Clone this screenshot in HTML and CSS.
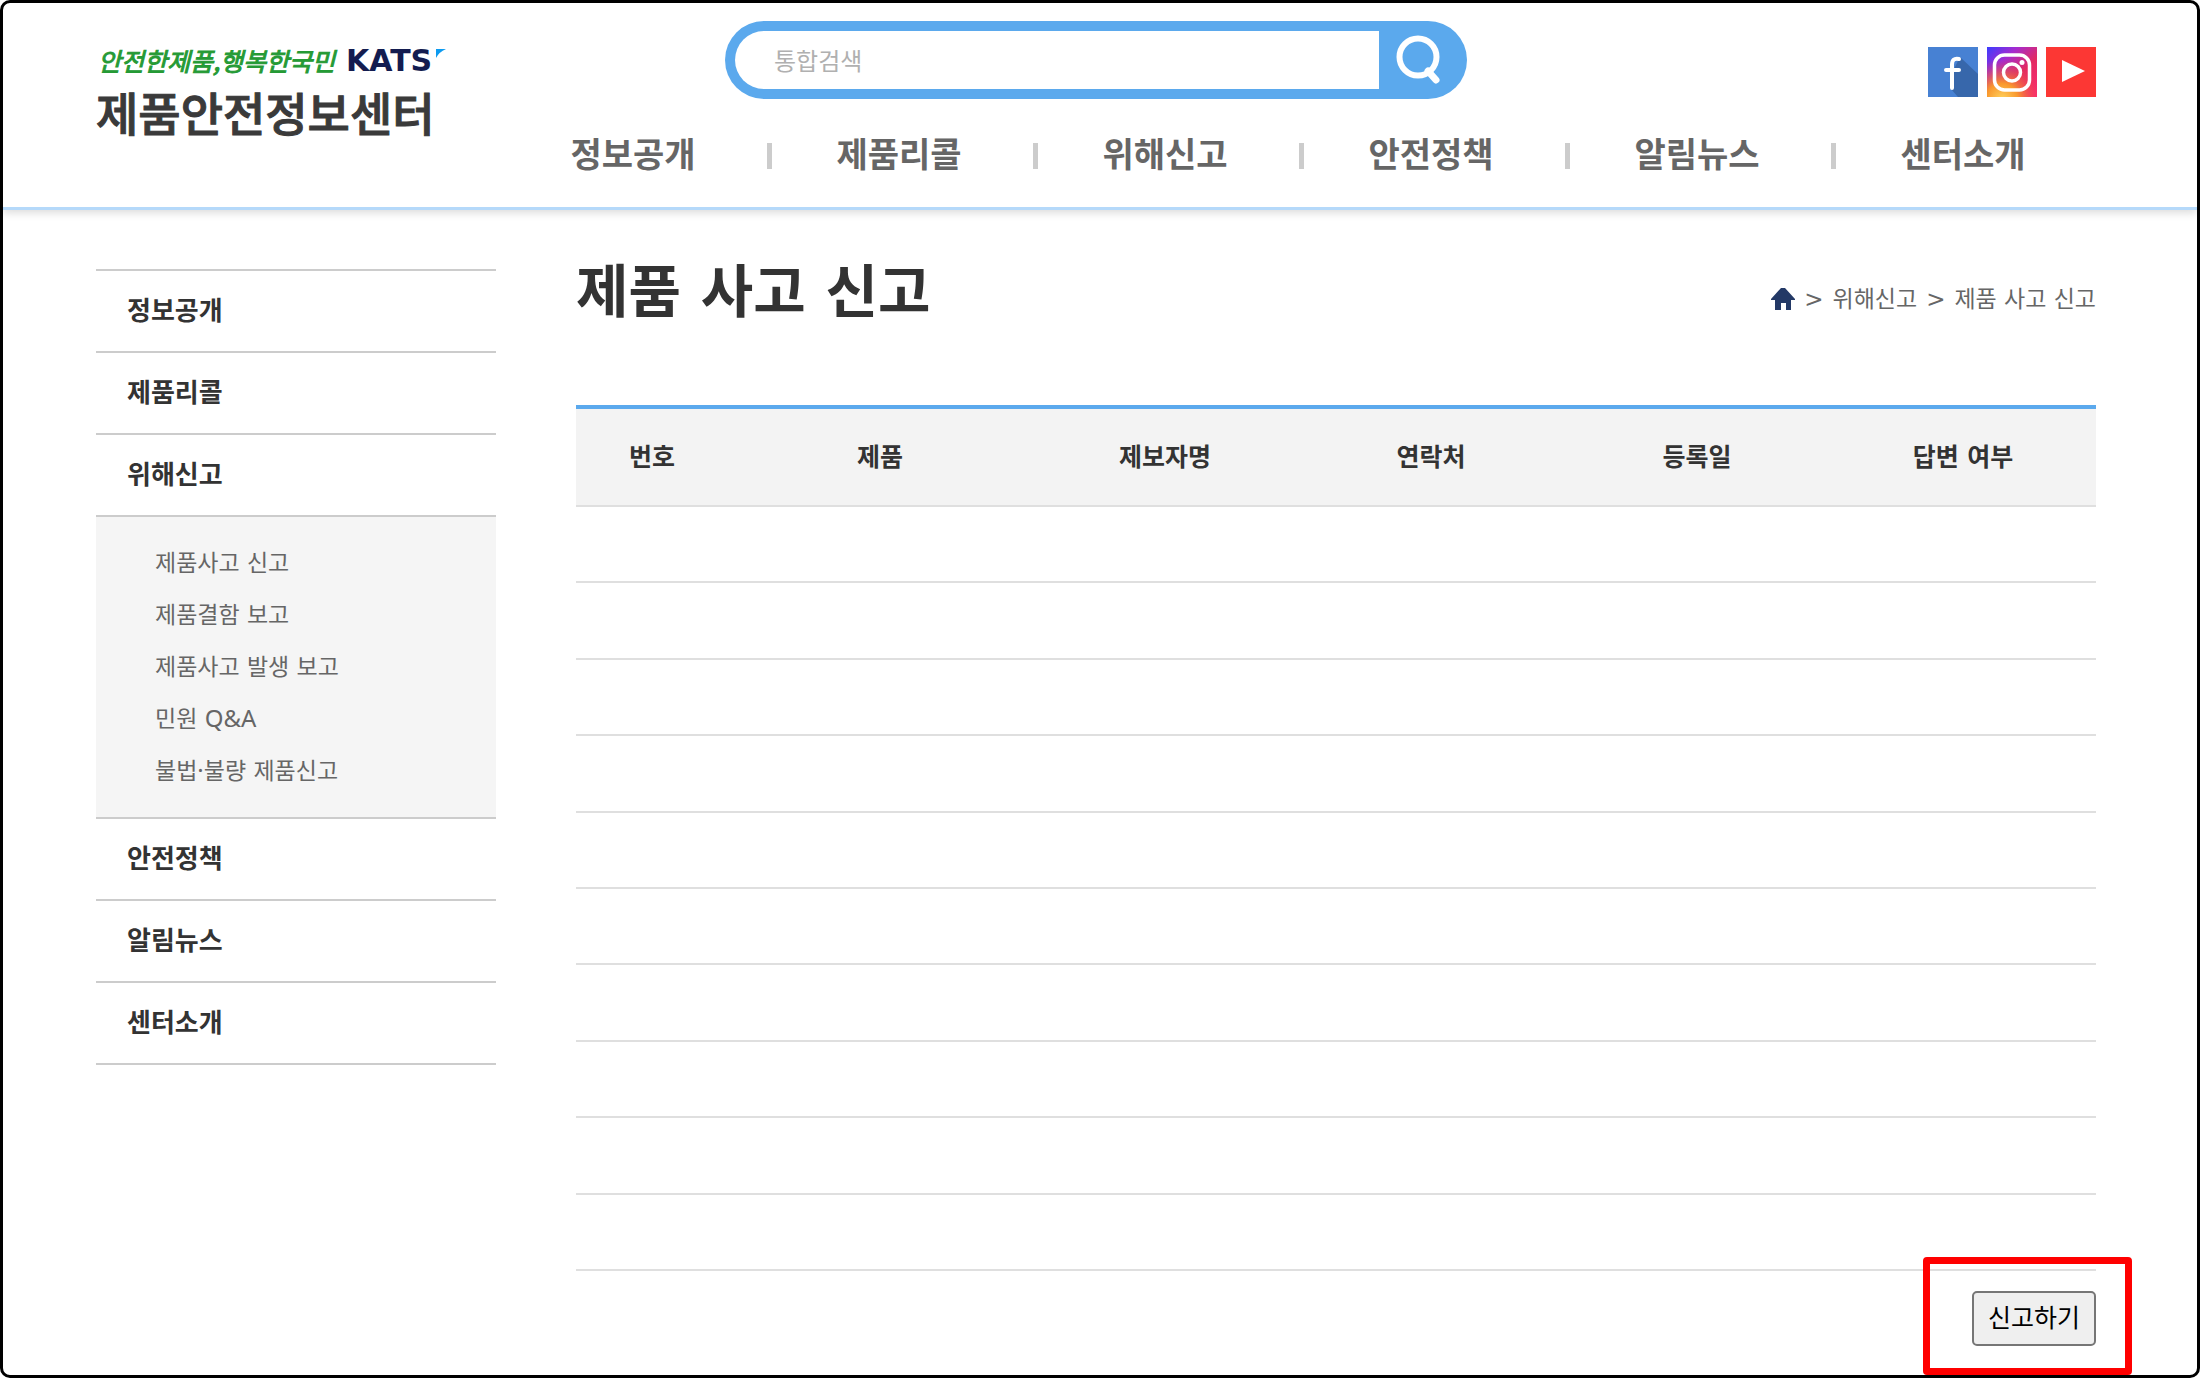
FILE: index.html
```html
<!DOCTYPE html>
<html lang="ko">
<head>
<meta charset="utf-8">
<meta name="viewport" content="width=device-width, initial-scale=1">
<title>제품 사고 신고 - 제품안전정보센터</title>
<link rel="stylesheet" href="styles.css">
</head>
<body>
<div class="frame">
  <header class="header">
    <a class="logo" href="#">
      <span class="logo-top">
        <span class="slogan">안전한제품,행복한국민</span>
        <span class="kats">KATS</span>
        <svg class="kats-mark" viewBox="0 0 10 9" aria-hidden="true"><path d="M0 0h10Q3 3 0 9z" fill="#0d9bf0"/></svg>
      </span>
      <span class="logo-name">제품안전정보센터</span>
    </a>
    <div class="header-main">
      <div class="header-tools">
        <form class="search" role="search">
          <input class="search-input" type="search" placeholder="통합검색" aria-label="통합검색">
          <button class="search-button" type="button" aria-label="검색">
            <svg viewBox="0 0 50 50" aria-hidden="true"><path d="M33 36L41 45" stroke="#fff" stroke-width="7" stroke-linecap="round"/><circle cx="23" cy="22" r="18.5" fill="none" stroke="#fff" stroke-width="6"/></svg>
          </button>
        </form>
        <div class="social">
          <a href="#" aria-label="페이스북"><svg viewBox="0 0 50 50"><path fill="#4781d3" d="M0 0h50v50H0z"/><path fill="#3767ab" d="M32 10l18 17v23H30l-7-8 3-20z"/><path d="M31 12c-5-1-7 1-7 6v23M18 23h13" fill="none" stroke="#fff" stroke-width="4" stroke-linecap="round"/></svg></a>
          <a href="#" aria-label="인스타그램"><svg viewBox="0 0 50 50"><defs>
            <linearGradient id="ig" x1="0" y1="0" x2="1" y2="1"><stop offset="0" stop-color="#3b3cff"/><stop offset=".3" stop-color="#a42bd0"/><stop offset=".6" stop-color="#e22b62"/><stop offset="1" stop-color="#ff2c72"/></linearGradient>
            <radialGradient id="ig-glow" cx=".3" cy="1.05" r=".8"><stop offset="0" stop-color="#ffd45e"/><stop offset=".4" stop-color="#f9982e"/><stop offset="1" stop-color="#e8324e" stop-opacity="0"/></radialGradient></defs>
            <path fill="url(#ig)" d="M0 0h50v50H0z"/><path fill="url(#ig-glow)" d="M0 0h50v50H0z"/><rect x="7.500" y="8" width="35" height="35" rx="10" fill="none" stroke="#fff" stroke-width="3.500"/><circle cx="25" cy="25.500" r="8.500" fill="none" stroke="#fff" stroke-width="3.500"/><circle cx="35" cy="15.500" r="2.500" fill="#fff"/></svg></a>
          <a href="#" aria-label="유튜브"><svg viewBox="0 0 50 50"><path fill="#fc3734" d="M0 0h50v50H0z"/><path fill="#fff" d="M16 13l23 11-23 11z"/></svg></a>
        </div>
      </div>
      <nav aria-label="주 메뉴">
        <ul class="main-nav">
          <li><a href="#">정보공개</a></li>
          <li><a href="#">제품리콜</a></li>
          <li><a href="#">위해신고</a></li>
          <li><a href="#">안전정책</a></li>
          <li><a href="#">알림뉴스</a></li>
          <li><a href="#">센터소개</a></li>
        </ul>
      </nav>
    </div>
  </header>

  <div class="page">
    <nav class="sidebar" aria-label="사이드 메뉴">
      <ul class="side-menu">
        <li><a class="side-link" href="#">정보공개</a></li>
        <li><a class="side-link" href="#">제품리콜</a></li>
        <li><a class="side-link" href="#">위해신고</a>
          <ul class="sub-menu">
            <li><a href="#">제품사고 신고</a></li>
            <li><a href="#">제품결함 보고</a></li>
            <li><a href="#">제품사고 발생 보고</a></li>
            <li><a href="#">민원 <span class="latin">Q&amp;A</span></a></li>
            <li><a href="#">불법<span class="latin">·</span>불량 제품신고</a></li>
          </ul>
        </li>
        <li><a class="side-link" href="#">안전정책</a></li>
        <li><a class="side-link" href="#">알림뉴스</a></li>
        <li><a class="side-link" href="#">센터소개</a></li>
      </ul>
    </nav>

    <main class="content">
      <div class="title-row">
        <h1>제품 사고 신고</h1>
        <nav class="breadcrumb" aria-label="현재 위치">
          <a class="home" href="#" aria-label="홈"><svg viewBox="0 0 24 22"><path fill="#233966" d="M10 0h4l10 11v1h-4v10h-5v-7h-5v7H4V12H0v-1z"/></svg></a>
          <span>&gt;</span><a href="#">위해신고</a><span>&gt;</span><a href="#">제품 사고 신고</a>
        </nav>
      </div>
      <table class="board">
        <colgroup><col class="col-no"><col class="col-product"><col><col><col><col></colgroup>
        <thead><tr><th>번호</th><th>제품</th><th>제보자명</th><th>연락처</th><th>등록일</th><th>답변 여부</th></tr></thead>
        <tbody>
          <tr><td></td><td></td><td></td><td></td><td></td><td></td></tr>
          <tr><td></td><td></td><td></td><td></td><td></td><td></td></tr>
          <tr><td></td><td></td><td></td><td></td><td></td><td></td></tr>
          <tr><td></td><td></td><td></td><td></td><td></td><td></td></tr>
          <tr><td></td><td></td><td></td><td></td><td></td><td></td></tr>
          <tr><td></td><td></td><td></td><td></td><td></td><td></td></tr>
          <tr><td></td><td></td><td></td><td></td><td></td><td></td></tr>
          <tr><td></td><td></td><td></td><td></td><td></td><td></td></tr>
          <tr><td></td><td></td><td></td><td></td><td></td><td></td></tr>
          <tr><td></td><td></td><td></td><td></td><td></td><td></td></tr>
        </tbody>
      </table>
      <div class="actions">
        <div class="highlight"><button class="report-button" type="button">신고하기</button></div>
      </div>
    </main>
  </div>
</div>
</body>
</html>
```

FILE: styles.css
```css
* {
  box-sizing: border-box;
}

body {
  margin: 0;
  background: #fff;
  color: #333;
  font-family: "DejaVu Sans", "Noto Sans CJK KR", sans-serif;
}

ul {
  margin: 0;
  padding: 0;
  list-style: none;
}

a {
  color: inherit;
  text-decoration: none;
}

svg {
  display: block;
}

.latin {
  font-family: "Noto Sans", sans-serif;
  font-size: 24px;
  line-height: 1;
}

.frame {
  min-height: 100vh;
  border: 3px solid #000;
  border-radius: 10px;
}

/* Header */
.header {
  display: grid;
  grid-template-columns: 404px 1fr;
  padding: 18px 101px 0 93px;
  border-bottom: 3px solid #b5d9fa;
  box-shadow: 0 3px 8px rgba(0, 0, 0, 0.14);
}

.logo {
  display: flex;
  flex-direction: column;
  padding-top: 20px;
}

.logo-top {
  display: flex;
  padding-left: 2px;
  height: 40px;
}

.slogan {
  width: 248px;
  color: #259a35;
  font-family: "Noto Sans CJK KR", sans-serif;
  font-size: 25px;
  font-style: italic;
  line-height: 38px;
  white-space: nowrap;
  -webkit-text-stroke: 1px #259a35;
}

.kats {
  color: #131c50;
  font-family: "DejaVu Sans", sans-serif;
  font-size: 30px;
  font-weight: 700;
  line-height: 40px;
}

.kats-mark {
  width: 10px;
  height: 9px;
  margin: 8px 0 0 4px;
}

.logo-name {
  color: #3a3a3a;
  font-family: "Noto Sans CJK KR", sans-serif;
  font-size: 46px;
  font-weight: 500;
  line-height: 60px;
  white-space: nowrap;
  -webkit-text-stroke: 1px #3a3a3a;
}

.header-tools {
  display: flex;
  justify-content: space-between;
  align-items: flex-start;
  padding-left: 225px;
}

.search {
  display: flex;
  width: 742px;
  height: 78px;
  padding: 10px;
  border-radius: 39px;
  background: #5ba9ed;
}

.search-input {
  width: 644px;
  padding: 0 39px 2px;
  border: 0;
  border-radius: 29px 0 0 29px;
  background: #fff;
  font-family: "Noto Sans CJK KR", sans-serif;
  font-size: 24px;
}

.search-input::placeholder {
  color: #b0b0b0;
}

.search-button {
  width: 78px;
  padding: 0 0 0 16px;
  border: 0;
  background: none;
}

.search-button svg {
  width: 50px;
  height: 50px;
}

.social {
  display: flex;
  gap: 9px;
  padding-top: 26px;
}

.social svg {
  width: 50px;
  height: 50px;
}

.main-nav {
  display: grid;
  grid-template-columns: repeat(6, 1fr);
  padding-top: 31px;
}

.main-nav li {
  padding-bottom: 27px;
  color: #666;
  font-size: 34px;
  font-weight: 700;
  line-height: 50px;
  text-align: center;
}

.main-nav li + li {
  background: linear-gradient(#ccc, #ccc) 1px 13px / 5px 26px no-repeat;
}

/* Page body */
.page {
  display: grid;
  grid-template-columns: 400px 1fr;
  column-gap: 80px;
  padding: 0 101px 29px 93px;
}

.sidebar {
  padding-top: 59px;
}

.side-menu {
  border-top: 2px solid #ccc;
}

.side-link {
  display: block;
  padding: 20px 31px;
  border-bottom: 2px solid #ccc;
  font-size: 26px;
  font-weight: 700;
  line-height: 40px;
}

.sub-menu {
  padding: 20px 59px;
  border-bottom: 2px solid #ccc;
  background: #f5f5f5;
  color: #666;
  font-size: 23px;
  line-height: 52px;
}

.title-row {
  display: flex;
  justify-content: space-between;
  align-items: center;
  height: 195px;
  padding-bottom: 32px;
}

h1 {
  margin: 0;
  font-size: 57px;
  font-weight: 700;
  line-height: 80px;
}

.breadcrumb {
  display: flex;
  align-items: center;
  gap: 9px;
  padding-top: 14px;
  color: #666;
  font-size: 23px;
  line-height: 40px;
}

.home svg {
  width: 24px;
  height: 22px;
}

.board {
  width: 100%;
  height: 866px;
  border-top: 4px solid #5ba9ed;
  border-spacing: 0;
  table-layout: fixed;
}

.col-no {
  width: 10%;
}

.col-product {
  width: 20%;
}

.board th {
  height: 98px;
  padding: 0 0 4px;
  border-bottom: 2px solid #dfdfdf;
  background: #f3f3f3;
  font-size: 25px;
  font-weight: 700;
}

.board td {
  padding: 0;
  border-bottom: 2px solid #dfdfdf;
}

.actions {
  display: flex;
  justify-content: flex-end;
  padding-top: 20px;
}

.highlight {
  position: relative;
}

.highlight::after {
  content: "";
  position: absolute;
  inset: -34px -36px -29px -49px;
  border: 7px solid #f00;
  border-radius: 4px;
  pointer-events: none;
}

.report-button {
  display: block;
  width: 124px;
  height: 55px;
  padding: 0 0 6px;
  border: 2px solid #767676;
  border-radius: 5px;
  background: #efefef;
  color: #000;
  font-family: "Noto Sans CJK KR", sans-serif;
  font-size: 25px;
}
```
